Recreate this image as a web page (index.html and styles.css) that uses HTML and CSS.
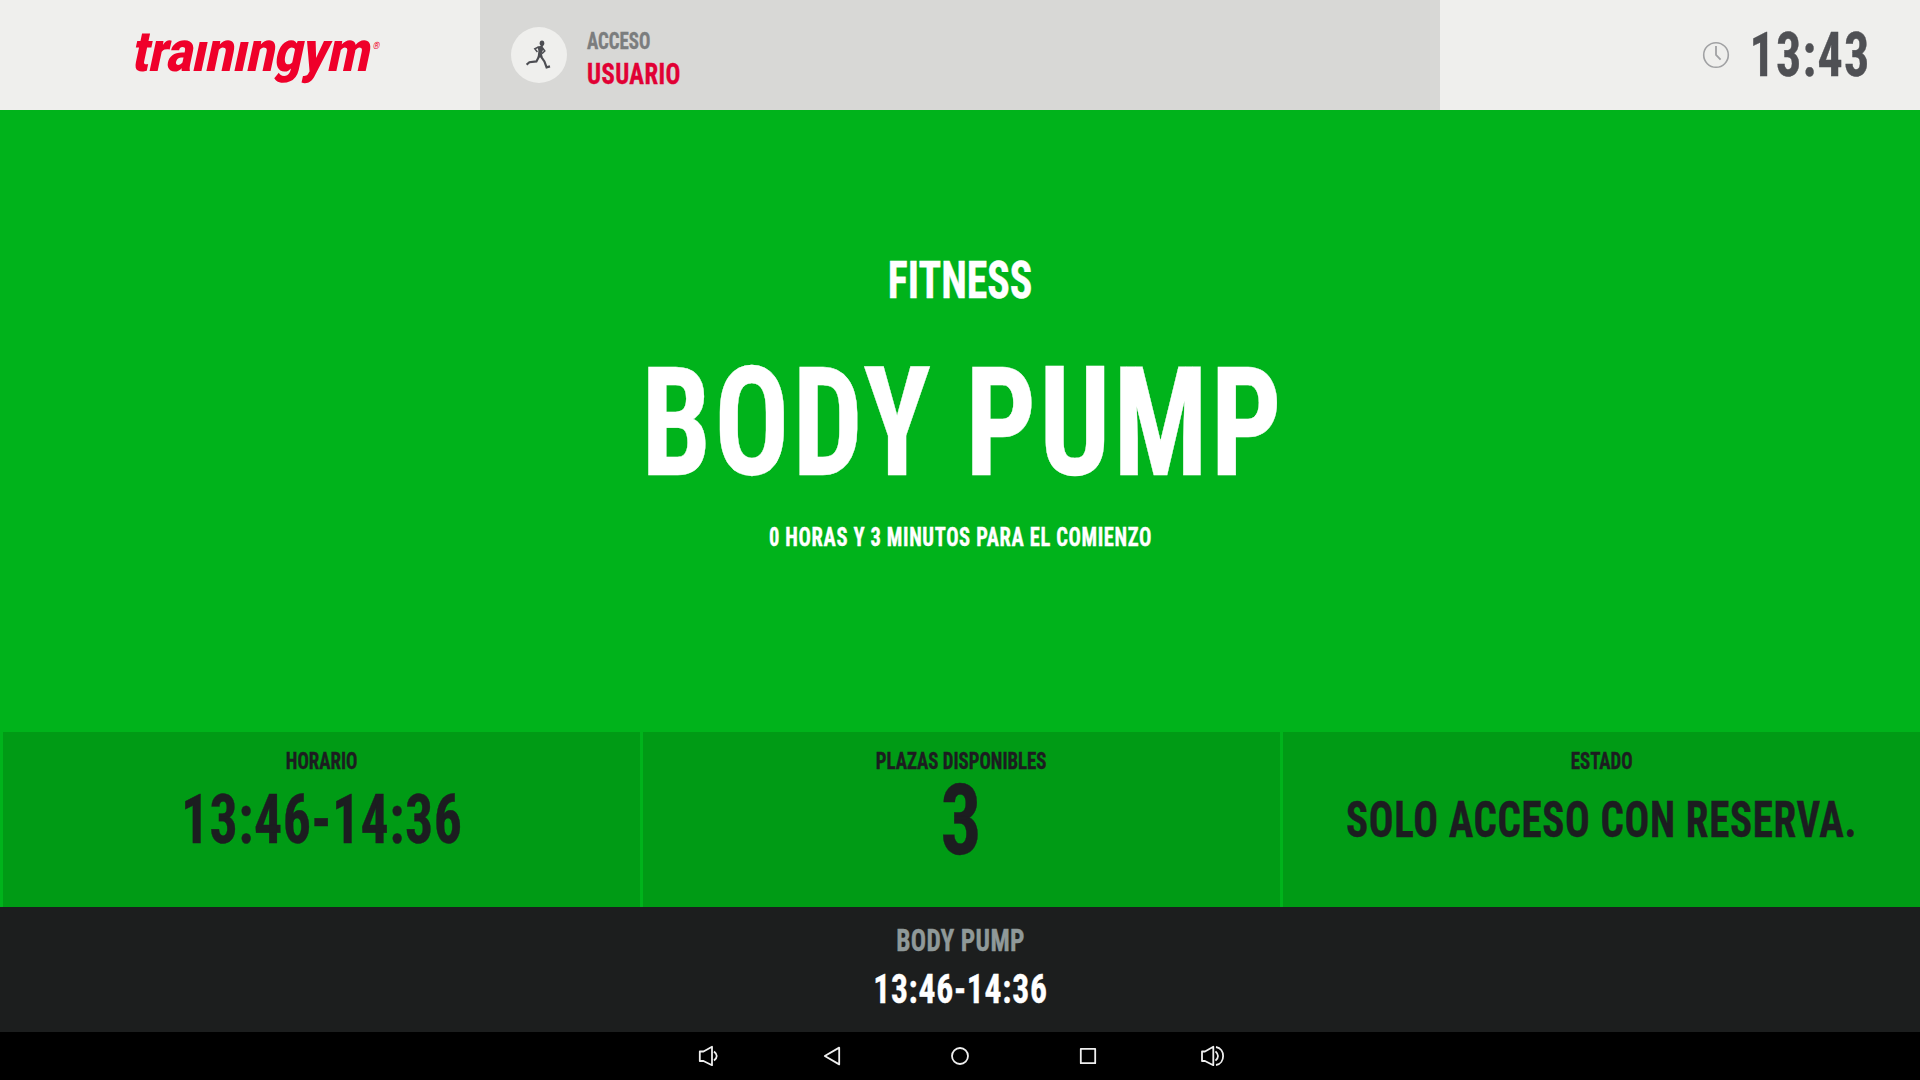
FILE: index.html
```html
<!DOCTYPE html>
<html lang="es">
<head>
    <meta charset="UTF-8">
    <meta name="viewport" content="width=device-width, initial-scale=1.0">
    <title>Trainingym - Control de acceso</title>
    <link rel="stylesheet" href="styles.css">
</head>
<body>
    <header class="header">
        <div class="brand">
            <div class="logo">tra<span class="dotless">i</span>n<span class="dotless">i</span>ngym<sup>®</sup></div>
        </div>
        <div class="access">
            <div class="avatar">
                <svg width="26" height="30" viewBox="0 0 26 30">
                    <ellipse cx="16" cy="3.2" rx="2.3" ry="2.8" fill="#4c4d52"/>
                    <path d="M11.6 6.4L16.8 5.6L17 10L15.8 13L16.6 17L11.6 17.6L12.4 11Z" fill="#4c4d52"/>
                    <path d="M12.6 7L8.8 8.8L11.4 12M16.4 7.6L18.8 11L16 13.6" fill="none" stroke="#4c4d52" stroke-width="1.5"/>
                    <path d="M13 16.6L10.4 21.4L3.4 22.2L0.6 24.6M15 16.6L18.4 21.4L20.6 27.4L24 26.4" fill="none" stroke="#4c4d52" stroke-width="2.2"/>
                </svg>
            </div>
            <div class="user">
                <div class="user-label"><span class="cond">ACCESO</span></div>
                <div class="user-name"><span class="cond">USUARIO</span></div>
            </div>
        </div>
        <div class="clock">
            <svg width="28" height="28" viewBox="0 0 28 28" fill="none" stroke="#a0a1a3">
                <circle cx="14" cy="14" r="12.3" stroke-width="1.6"/>
                <path d="M14 5V14L18.6 18.6" stroke-width="1.8"/>
            </svg>
            <div class="time"><span class="cond">13:43</span></div>
        </div>
    </header>

    <main class="activity">
        <div class="category"><span class="cond">FITNESS</span></div>
        <h1 class="title"><span class="cond">BODY PUMP</span></h1>
        <div class="countdown"><span class="cond">0 HORAS Y 3 MINUTOS PARA EL COMIENZO</span></div>
    </main>

    <section class="info">
        <div class="cell">
            <div class="label"><span class="cond">HORARIO</span></div>
            <div class="value schedule"><span class="cond">13:46-14:36</span></div>
        </div>
        <div class="cell">
            <div class="label"><span class="cond">PLAZAS DISPONIBLES</span></div>
            <div class="value places"><span class="cond">3</span></div>
        </div>
        <div class="cell">
            <div class="label"><span class="cond">ESTADO</span></div>
            <div class="value status"><span class="cond">SOLO ACCESO CON RESERVA.</span></div>
        </div>
    </section>

    <footer class="next">
        <div class="next-name"><span class="cond">BODY PUMP</span></div>
        <div class="next-time"><span class="cond">13:46-14:36</span></div>
    </footer>

    <nav class="navbar">
        <svg width="32" height="32" viewBox="0 0 32 32">
            <path d="M11.8 11.5H15.5L24 6.8V25.2L15.5 21H11.8Z"/>
            <path d="M26 11.5Q31.5 16 26 20.5"/>
        </svg>
        <svg width="32" height="32" viewBox="0 0 32 32">
            <path d="M23.2 7.6V24.4L8.8 16Z"/>
        </svg>
        <svg width="32" height="32" viewBox="0 0 32 32">
            <circle cx="16" cy="16" r="8"/>
        </svg>
        <svg width="32" height="32" viewBox="0 0 32 32">
            <rect x="8.8" y="8.8" width="14.4" height="14.4"/>
        </svg>
        <svg width="32" height="32" viewBox="0 0 32 32">
            <path d="M2 11.5H5L13.3 6.8V25.2L5 21H2Z"/>
            <path d="M15.5 11.3Q20.5 16 15.5 20.7M16 7C25.5 8.5 25.5 23.5 16 25"/>
        </svg>
    </nav>
</body>
</html>
```
FILE: styles.css
```css
* {
    box-sizing: border-box;
}
body {
    margin: 0;
    width: 1920px;
    height: 1080px;
    overflow: hidden;
    font-family: "Roboto Condensed", "Roboto", sans-serif;
    font-weight: 700;
    text-align: center;
    white-space: nowrap;
}
.cond {
    display: inline-block;
    transform: scaleX(0.82);
    -webkit-text-stroke: 0.4px currentColor;
}

/* header */
.header {
    display: grid;
    grid-template-columns: 480px 960px 480px;
    height: 110px;
    background-color: #efefed;
}
.brand {
    display: flex;
    padding: 16px 0 0 130px;
}
.logo {
    font-family: "Roboto", sans-serif;
    font-size: 57px;
    font-weight: 900;
    line-height: 72px;
    color: #ef002a;
    transform: skewX(-12deg) scaleX(0.855);
    transform-origin: left 57px;
}
.logo sup {
    font-size: 10px;
    font-weight: 400;
    line-height: 0;
    vertical-align: 22px;
}
.dotless {
    display: inline-block;
    clip-path: inset(26px 0 0 0);
}
.access {
    display: flex;
    align-items: center;
    background-color: #d8d8d6;
    padding-left: 31px;
    text-align: left;
}
.avatar {
    display: flex;
    align-items: center;
    justify-content: center;
    width: 56px;
    height: 56px;
    border-radius: 50%;
    background-color: #efefed;
}
.user {
    margin-left: 20px;
    padding-top: 5px;
    line-height: 32px;
}
.user .cond {
    transform-origin: left;
}
.user-label {
    font-size: 23px;
    color: #7b7d7e;
}
.user-name {
    font-size: 30px;
    letter-spacing: 0.5px;
    color: #e10034;
}
.clock {
    display: flex;
    align-items: center;
    justify-content: flex-end;
    padding-right: 50px;
}
.time {
    margin-left: -7px;
    font-size: 61px;
    line-height: 110px;
    letter-spacing: 1.5px;
    color: #4f5054;
}
.time .cond {
    transform-origin: right;
}

/* current activity */
.activity {
    height: 622px;
    padding-top: 141px;
    background-color: #00b31b;
    color: #fff;
}
.category {
    font-size: 51px;
    line-height: 60px;
}
.title {
    margin: 22px 0 10px;
    font-size: 152px;
    line-height: 180px;
    letter-spacing: 3.6px;
    text-indent: 3px;
}
.countdown {
    font-size: 25px;
    line-height: 30px;
    letter-spacing: 0.76px;
}

/* info cells */
.info {
    display: grid;
    grid-template-columns: repeat(3, 1fr);
    height: 175px;
    background-color: #00b31b;
    color: #1c1d20;
}
.cell {
    margin-left: 3px;
    padding-top: 15px;
    background-color: #009b15;
}
.label {
    font-size: 23px;
    line-height: 30px;
}
.value {
    line-height: 87px;
}
.schedule {
    font-size: 68px;
    letter-spacing: 0.6px;
}
.places {
    font-size: 99px;
}
.status {
    font-size: 50px;
    letter-spacing: 0.8px;
}

/* next activity */
.next {
    height: 125px;
    padding-top: 14px;
    background-color: #1c1e1e;
}
.next-name {
    font-size: 31px;
    line-height: 40px;
    letter-spacing: 0.4px;
    color: #8f9999;
}
.next-time {
    margin-top: 3px;
    font-size: 41px;
    line-height: 50px;
    letter-spacing: 0.9px;
    color: #fff;
}

/* android bar */
.navbar {
    display: flex;
    justify-content: center;
    align-items: center;
    gap: 96px;
    height: 48px;
    background-color: #000;
}
.navbar svg {
    fill: none;
    stroke: #efefef;
    stroke-width: 1.8;
    stroke-linejoin: round;
}
```
